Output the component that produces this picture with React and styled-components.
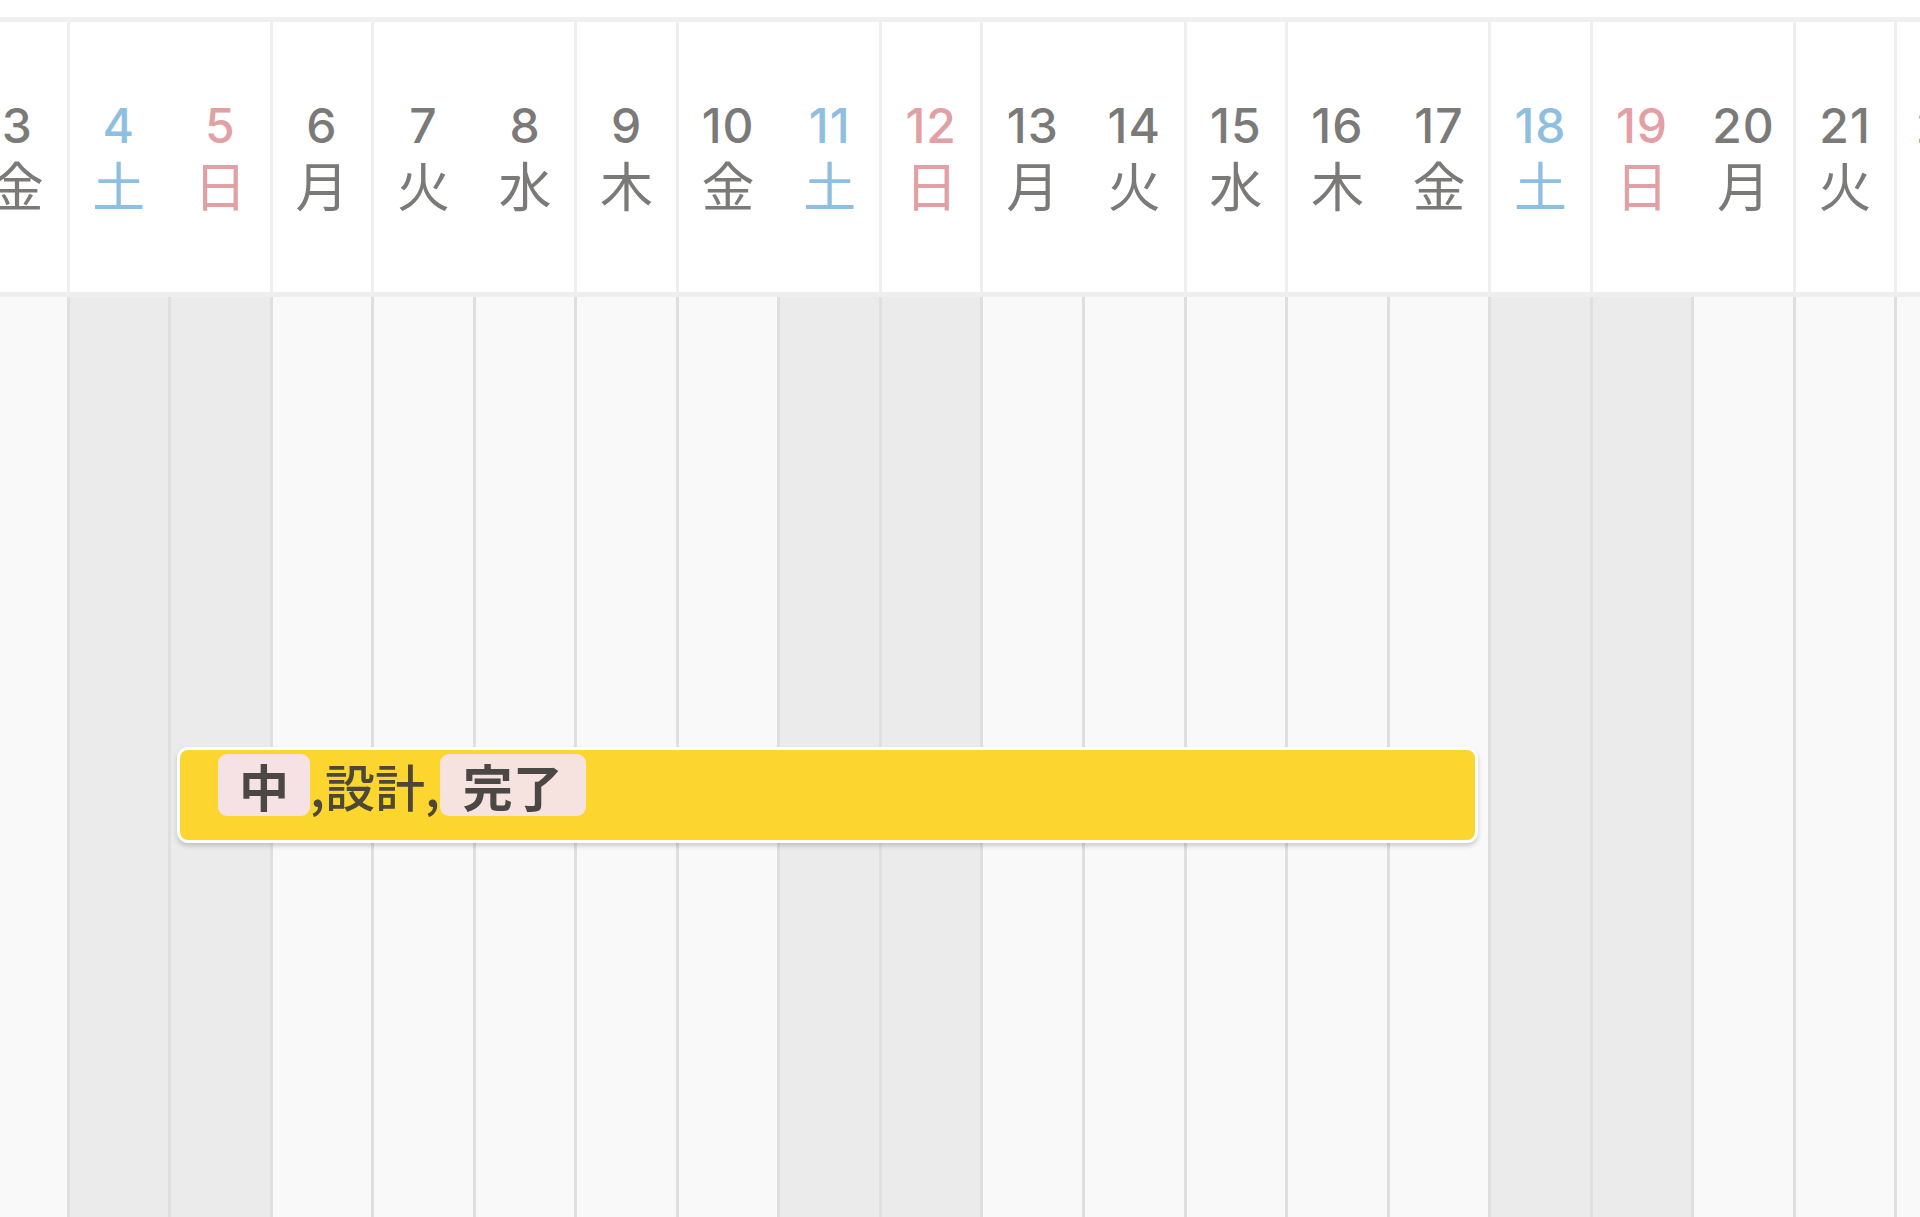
import React from 'react'
import styled, { createGlobalStyle } from 'styled-components'

const COL = 101.56

const GlobalStyle = createGlobalStyle`
  html, body {
    margin: 0;
    padding: 0;
    background: #ffffff;
  }
  body {
    font-family: Inter, "Noto Sans CJK JP", sans-serif;
  }
`

const Page = styled.div`
  width: 1920px;
  height: 1217px;
  overflow: hidden;
  background: #ffffff;
  padding-top: 17px;
  box-sizing: border-box;
`

const Timeline = styled.div`
  display: flex;
  flex-direction: column;
  margin-left: -32px;
  width: max-content;
  height: 100%;
`

const HeaderRow = styled.div`
  display: flex;
  height: 280px;
  border-top: 5px solid #f0f0f0;
  border-bottom: 5px solid #eeeeee;
  box-sizing: border-box;
`

const DayCell = styled.div`
  width: ${COL}px;
  flex: none;
  box-sizing: border-box;
  border-right: 3px solid ${(p) => (p.$divider ? '#efefef' : 'transparent')};
  display: flex;
  flex-direction: column;
  align-items: center;
  padding-top: 79px;
  color: ${(p) => (p.$tone === 'sat' ? '#8fbfe0' : p.$tone === 'sun' ? '#e2a0a5' : '#7b7a78')};
`

const DayNum = styled.div`
  font-family: Inter, "Noto Sans CJK JP", sans-serif;
  font-size: 48px;
  font-weight: 500;
  line-height: 50px;
  letter-spacing: 1px;
`

const WeekDay = styled.div`
  font-family: "Noto Sans CJK JP", sans-serif;
  font-size: 53px;
  font-weight: 400;
  line-height: 66px;
`

const Body = styled.div`
  position: relative;
  flex: 1;
  display: flex;
`

const Column = styled.div`
  width: ${COL}px;
  flex: none;
  box-sizing: border-box;
  border-right: 3px solid #dfdfdf;
  background: ${(p) => (p.$weekend ? '#ebebeb' : '#f9f9f9')};
`

const Bar = styled.div`
  position: absolute;
  left: 209px;
  top: 450px;
  width: 1301px;
  height: 96px;
  box-sizing: border-box;
  border: 3px solid #ffffff;
  border-radius: 11px;
  background: #fcd62f;
  box-shadow: 0 3px 5px rgba(0, 0, 0, 0.18);
  padding: 4px 36px 0 38px;
  display: flex;
  align-items: flex-start;
  font-family: "Noto Sans CJK JP", sans-serif;
  font-size: 50px;
  color: #4a4640;
  white-space: nowrap;
`

const Tag = styled.span`
  display: inline-flex;
  align-items: center;
  height: 62px;
  padding: 0 ${(p) => p.$pad}px;
  border-radius: 9px;
  background: ${(p) => p.$bg};
  font-weight: 700;
  color: #4b4744;
`

const Plain = styled.span`
  display: inline-flex;
  align-items: center;
  height: 62px;
  font-weight: 500;
  color: #4d4836;
`

const WEEK = ['日', '月', '火', '水', '木', '金', '土']

// 3rd is a Friday
const days = Array.from({ length: 20 }, (_, i) => {
  const d = i + 3
  const w = (d + 2) % 7
  return { d, w }
})

export default function App() {
  return (
    <Page>
      <GlobalStyle />
      <Timeline>
        <HeaderRow>
          {days.map(({ d, w }) => (
            <DayCell
              key={d}
              $divider={(d - 4) % 3 !== 0}
              $tone={w === 6 ? 'sat' : w === 0 ? 'sun' : 'week'}
            >
              <DayNum>{d}</DayNum>
              <WeekDay>{WEEK[w]}</WeekDay>
            </DayCell>
          ))}
        </HeaderRow>
        <Body>
          {days.map(({ d, w }) => (
            <Column key={d} $weekend={w === 0 || w === 6} />
          ))}
          <Bar>
            <Tag $bg="#f6e1e5" $pad={21}>中</Tag>
            <Plain>,設計,</Plain>
            <Tag $bg="#f6e3df" $pad={23}>完了</Tag>
          </Bar>
        </Body>
      </Timeline>
    </Page>
  )
}
